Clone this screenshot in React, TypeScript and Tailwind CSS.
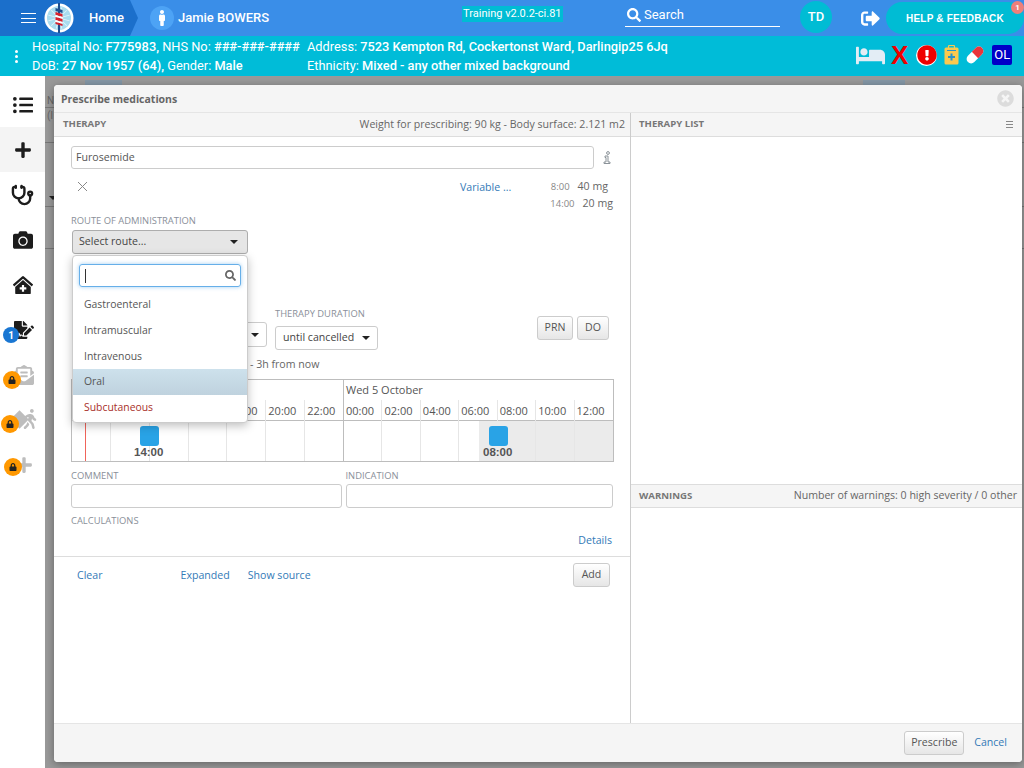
import React from 'react';
import { Stethoscope } from 'lucide-react';
import {
  FaBed,
  FaCamera,
  FaClinicMedical,
  FaEnvelopeOpenText,
  FaExclamationCircle,
  FaFileSignature,
  FaListUl,
  FaLock,
  FaMale,
  FaPlus,
  FaSearch,
  FaSignOutAlt,
  FaTimesCircle,
  FaWalking,
} from 'react-icons/fa';

const routes = ['Gastroenteral', 'Intramuscular', 'Intravenous', 'Oral', 'Subcutaneous'];
const hours = ['10:00', '12:00', '14:00', '16:00', '18:00', '20:00', '22:00', '00:00', '02:00', '04:00', '06:00', '08:00', '10:00', '12:00'];
const rays = [0, 30, 60, 90, 120, 150];

function Logo() {
  return (
    <svg width="30" height="30" viewBox="0 0 30 30" className="shrink-0">
      <circle cx="15" cy="15" r="14.5" fill="#fff" />
      <circle cx="15" cy="15" r="12" fill="#a9dcef" />
      {rays.map((a) => (
        <rect key={a} x="14.6" y="4" width="0.8" height="22" fill="#e4f5fa" transform={`rotate(${a + 15} 15 15)`} />
      ))}
      <circle cx="15" cy="15" r="4" fill="#d6eff6" />
      <rect x="14" y="0" width="2" height="30" fill="#1d4f8f" />
      <path d="M11.5 5 L18.5 7 V10 L11.5 8z" fill="#1d4f8f" />
      <path d="M11.5 9 L18.5 11 V14 L11.5 12z" fill="#d8202c" />
      <path d="M11.5 12 L18.5 14 V16 L11.5 14z" fill="#fff" />
      <path d="M11.5 14 L18.5 16 V19 L11.5 17z" fill="#d8202c" />
      <path d="M11.5 17 L18.5 19 V21 L11.5 19z" fill="#fff" />
      <path d="M11.5 19 L18.5 21 V23 L11.5 21z" fill="#d8202c" />
    </svg>
  );
}

function Capsule() {
  return (
    <svg width="20" height="20" viewBox="0 0 20 20">
      <g transform="rotate(-45 10 10)">
        <rect x="0" y="5.5" width="20" height="9" rx="4.5" fill="#fff" />
        <path d="M10 5.5 h5.5 a4.5 4.5 0 0 1 0 9 H10z" fill="#e9353b" />
      </g>
    </svg>
  );
}

function ClipboardPlus() {
  return (
    <svg width="15" height="20" viewBox="0 0 15 20">
      <rect x="0.5" y="2.5" width="14" height="17" rx="1.5" fill="#fbc94f" />
      <rect x="4.5" y="0.5" width="6" height="4" rx="1" fill="none" stroke="#fbc94f" strokeWidth="1.2" />
      <rect x="3" y="5" width="9" height="1" fill="#2a93c9" />
      <path d="M6.5 8.5 h2 v2.5 h2.5 v2 h-2.5 v2.5 h-2 v-2.5 h-2.5 v-2 h2.5z" fill="#2a93c9" />
    </svg>
  );
}

function InfoGlyph() {
  return (
    <svg width="8" height="13" viewBox="0 0 8 13" fill="none" stroke="#8a9298" strokeWidth="1">
      <circle cx="5" cy="2" r="1.4" />
      <path d="M2 5 H5 V11 H7 V12.5 H1 V11 H3 V6.5 H2z" />
    </svg>
  );
}

function Caret() {
  return <span className="inline-block w-0 h-0 border-x-[4px] border-x-transparent border-t-[4px] border-t-[#222]" />;
}

function LockBadge({ className }: { className: string }) {
  return (
    <span className={`absolute w-[18px] h-[18px] rounded-full bg-[#ff9800] flex items-center justify-center ${className}`}>
      <FaLock className="text-[#222] text-[8px]" />
    </span>
  );
}

function Label({ children }: { children: React.ReactNode }) {
  return <div className="text-[9.4px] leading-[12px] text-[#8a8f99] uppercase">{children}</div>;
}

function SideItem({ children, active }: { children: React.ReactNode; active?: boolean }) {
  return <div className={`relative h-[45px] flex items-center justify-center ${active ? 'bg-[#f4f4f4]' : ''}`}>{children}</div>;
}

function Sidebar() {
  return (
    <div className="w-[45px] shrink-0 bg-white pt-[6px] text-[#1c1c1c]">
      <SideItem><FaListUl className="text-[20px]" /></SideItem>
      <SideItem active><FaPlus className="text-[18px]" /></SideItem>
      <SideItem><Stethoscope size={23} strokeWidth={2.5} className="mt-[2px]" /></SideItem>
      <SideItem><FaCamera className="text-[20px]" /></SideItem>
      <SideItem><FaClinicMedical className="text-[20px]" /></SideItem>
      <SideItem>
        <FaFileSignature className="text-[20px] ml-[3px]" />
        <span className="absolute left-[3px] top-[20px] w-[16px] h-[16px] rounded-full bg-[#1976d2] text-white text-[10px] font-bold flex items-center justify-center">1</span>
      </SideItem>
      <SideItem>
        <FaEnvelopeOpenText className="text-[20px] text-[#bdbdbd] ml-[3px]" />
        <LockBadge className="left-[3px] top-[19px]" />
      </SideItem>
      <SideItem>
        <span className="absolute left-[13px] top-[16px] w-[13px] h-[13px] bg-[#bdbdbd] rotate-45" />
        <FaWalking className="relative text-[20px] text-[#bdbdbd] ml-[14px] mb-[2px]" />
        <LockBadge className="left-[1px] top-[18px]" />
      </SideItem>
      <SideItem>
        <FaPlus className="text-[18px] text-[#bdbdbd] ml-[3px]" />
        <LockBadge className="left-[4px] top-[16px]" />
      </SideItem>
    </div>
  );
}

function TimeGrid() {
  return (
    <div className="mt-[7px] w-[543px] h-[83px] border border-[#bdbdbd] text-[11px] text-[#555]">
      <div className="h-[20px] grid grid-cols-[repeat(7,38.86px)_repeat(7,1fr)]">
        <div className="col-span-7 border-r border-[#bdbdbd]" />
        <div className="col-span-7 pl-[2px] leading-[20px]">Wed 5 October</div>
      </div>
      <div className="h-[21px] grid grid-cols-[repeat(7,38.86px)_repeat(7,1fr)] border-b border-[#bdbdbd]">
        {hours.map((h, i) => (
          <div key={i} className={`pl-[2px] leading-[22px] ${i === 6 ? 'border-r border-[#bdbdbd]' : 'border-r border-[#e6e6e6]'} ${i === 13 ? 'border-r-0' : ''}`}>{h}</div>
        ))}
      </div>
      <div className="relative h-[40px] grid grid-cols-[repeat(7,38.86px)_repeat(7,1fr)]">
        {hours.map((h, i) => (
          <div key={i} className={`${i === 6 ? 'border-r border-[#bdbdbd]' : 'border-r border-[#e6e6e6]'} ${i === 13 ? 'border-r-0' : ''} ${i >= 11 ? 'bg-[#ebebeb]' : ''}`} />
        ))}
        <div className="absolute left-[407px] top-0 bottom-0 w-[20px] bg-[#ebebeb]" />
        <div className="absolute left-[13px] top-0 bottom-0 w-px bg-[#f0645a]" />
        <div className="absolute left-[68px] top-[5px] w-[19px] h-[20px] rounded-[3px] bg-[#29a3e6]" />
        <div className="absolute left-[62px] top-[24px] text-[11.5px] leading-[14px] font-bold text-[#555] font-['Liberation_Sans',sans-serif]">14:00</div>
        <div className="absolute left-[417px] top-[5px] w-[19px] h-[20px] rounded-[3px] bg-[#29a3e6]" />
        <div className="absolute left-[411px] top-[24px] text-[11.5px] leading-[14px] font-bold text-[#555] font-['Liberation_Sans',sans-serif]">08:00</div>
      </div>
    </div>
  );
}

function RouteDropdown() {
  return (
    <div className="absolute left-[18px] top-[142px] w-[176px] h-[168px] bg-white border border-[#ccc] rounded-[4px] shadow-[0_3px_10px_rgba(0,0,0,0.25)] pt-[8px] overflow-hidden z-10">
      <div className="mx-[6px] h-[23px] border border-[#66afe9] rounded-[3px] shadow-[0_0_4px_rgba(102,175,233,0.6)] flex items-center justify-between pl-[5px] pr-[4px]">
        <span className="w-px h-[14px] bg-[#333]" />
        <FaSearch className="text-[11px] text-[#666]" />
      </div>
      <div className="mt-[5px] text-[10.4px] text-[#555]">
        {routes.map((r) => (
          <div
            key={r}
            className={`h-[25.75px] leading-[25px] pl-[11px] ${r === 'Oral' ? 'bg-gradient-to-b from-[#cde1ec] to-[#bfd2de]' : ''} ${r === 'Subcutaneous' ? 'text-[#a9302a]' : ''}`}
          >
            {r}
          </div>
        ))}
      </div>
    </div>
  );
}

function TherapyPanel() {
  return (
    <div className="relative w-[577px] shrink-0 border-r border-[#ccc] flex flex-col">
      <div className="h-[24px] bg-[#f5f5f5] border-b border-[#ddd] flex items-center justify-between pl-[9px] pr-[5px] text-[9.6px] text-[#777]">
        <span className="font-bold">THERAPY</span>
        <span className="text-[10.6px] text-[#666]">Weight for prescribing: 90 kg - Body surface: 2.121 m2</span>
      </div>

      <div className="flex-1 px-[17px] pt-[9px]">
        <div className="flex items-center">
          <div className="w-[523px] h-[23px] border border-[#ccc] rounded-[3px] pl-[4px] text-[10.6px] leading-[20px] text-[#555]">Furosemide</div>
          <span className="ml-[9px] flex"><InfoGlyph /></span>
        </div>

        <div className="flex mt-[8px] h-[38px] text-[10.6px]">
          <svg width="11" height="11" viewBox="0 0 11 11" className="ml-[6px] mt-[4px]">
            <path d="M1 1 L10 10 M10 1 L1 10" stroke="#888" strokeWidth="1" />
          </svg>
          <span className="ml-[372px] mt-[3px] text-[#337ab7]">Variable ...</span>
          <div className="ml-auto text-right leading-[16px] text-[#666] mt-[1px]">
            <div><span className="text-[9.5px] text-[#888] mr-[8px]">8:00</span><span className="mr-[5px]">40 mg</span></div>
            <div><span className="text-[9.5px] text-[#888] mr-[8px]">14:00</span>20 mg</div>
          </div>
        </div>

        <Label>Route of administration</Label>
        <div className="mt-[3px] ml-[1px] w-[176px] h-[24px] bg-[#e6e6e6] border border-[#adadad] rounded-[3px] flex items-center justify-between px-[6px] text-[10.6px] text-[#444]">
          <span>Select route...</span>
          <span className="mr-[3px] flex"><Caret /></span>
        </div>

        <div className="mt-[54px] flex h-[39px]">
          <div className="w-[196px] flex flex-col items-end">
            <div className="h-[31px] w-[40px] border border-[#ccc] rounded-[3px] mt-[14px] flex items-center justify-center pl-[16px]"><Caret /></div>
          </div>
          <div className="ml-[8px]">
            <Label>Therapy duration</Label>
            <div className="mt-[6px] w-[103px] h-[24px] border border-[#ccc] rounded-[3px] flex items-center justify-between px-[7px] text-[10.6px] text-[#444]">
              <span>until cancelled</span>
              <Caret />
            </div>
          </div>
          <div className="ml-auto mr-[4px] flex gap-[4px] mt-[8px] text-[10.6px] text-[#555]">
            <button className="w-[36px] h-[24px] border border-[#ccc] rounded-[3px] bg-gradient-to-b from-white to-[#e6e6e6]">PRN</button>
            <button className="w-[32px] h-[24px] border border-[#ccc] rounded-[3px] bg-gradient-to-b from-white to-[#e6e6e6]">DO</button>
          </div>
        </div>

        <div className="mt-[9px] pl-[179px] h-[16px] text-[10.6px] leading-[16px] text-[#666]">- 3h from now</div>

        <TimeGrid />

        <div className="mt-[8px] flex gap-[4px]">
          <div className="w-[271px]">
            <Label>Comment</Label>
            <div className="mt-[2px] h-[24px] border border-[#ccc] rounded-[3px]" />
          </div>
          <div className="w-[268px]">
            <Label>Indication</Label>
            <div className="mt-[2px] h-[24px] border border-[#ccc] rounded-[3px]" />
          </div>
        </div>

        <div className="mt-[7px]"><Label>Calculations</Label></div>
        <div className="mt-[6px] w-[541px] text-right text-[10.6px] leading-[14px] text-[#337ab7]">Details</div>
      </div>

      <div className="absolute left-0 right-0 top-[443px] h-[37px] border-t border-[#ddd] flex items-start text-[10.6px] text-[#337ab7]">
        <span className="ml-[23px] mt-[11px]">Clear</span>
        <span className="ml-[78px] mt-[11px]">Expanded</span>
        <span className="ml-[18px] mt-[11px]">Show source</span>
        <button className="ml-auto mr-[20px] mt-[6px] w-[37px] h-[24px] border border-[#ccc] rounded-[3px] bg-gradient-to-b from-white to-[#e6e6e6] text-[#555]">Add</button>
      </div>

      <RouteDropdown />
    </div>
  );
}

function RightPanel() {
  return (
    <div className="flex-1 flex flex-col">
      <div className="h-[24px] bg-[#f5f5f5] border-b border-[#ddd] flex items-center justify-between px-[8px] text-[9.6px] text-[#777]">
        <span className="font-bold">THERAPY LIST</span>
        <span className="w-[7px] h-[7px] border-y border-[#888] flex items-center mr-[1px]"><span className="w-full h-px bg-[#888]" /></span>
      </div>
      <div className="h-[347px]" />
      <div className="h-[24px] bg-[#f5f5f5] border-y border-[#ddd] flex items-center justify-between pl-[8px] pr-[5px] text-[9.6px] text-[#777]">
        <span className="font-bold">WARNINGS</span>
        <span className="text-[10.6px] text-[#666]">Number of warnings: 0 high severity / 0 other</span>
      </div>
      <div className="flex-1" />
    </div>
  );
}

function PrescribeModal() {
  return (
    <div className="absolute left-[9px] top-[9px] w-[968px] h-[677px] bg-white rounded-[4px] shadow-[0_2px_8px_rgba(0,0,0,0.35)] flex flex-col overflow-hidden font-['Open_Sans',sans-serif]">
      <div className="h-[28px] shrink-0 bg-[#f5f5f5] border-b border-[#e5e5e5] flex items-center justify-between pl-[7px] pr-[8px]">
        <span className="pt-[2px] text-[10.5px] font-bold text-[#666]">Prescribe medications</span>
        <FaTimesCircle className="text-[17px] text-[#dcdcdc]" />
      </div>
      <div className="flex-1 flex min-h-0">
        <TherapyPanel />
        <RightPanel />
      </div>
      <div className="h-[39px] shrink-0 bg-[#f5f5f5] border-t border-[#e5e5e5] flex items-center justify-end pr-[15px] text-[10.6px]">
        <button className="w-[60px] h-[24px] border border-[#ccc] rounded-[3px] bg-gradient-to-b from-white to-[#e6e6e6] text-[#555]">Prescribe</button>
        <span className="ml-[10px] text-[#337ab7]">Cancel</span>
      </div>
    </div>
  );
}

function Backdrop() {
  return (
    <div className="relative h-full text-[10px] text-[#666]">
      <span className="absolute left-[40px] top-[4px] w-[37px] h-[5px] bg-[#8497a6]" />
      <span className="absolute left-[818px] top-[4px] w-[42px] h-[5px] bg-[#8497a6]" />
      <div className="h-[32px] border-b border-[#777] pt-[20px] pl-[2px] leading-none">N</div>
      <div className="h-[35px] border-b border-[#777] pl-[2px]">(l</div>
      <div className="h-[64px] border-b border-[#777] pt-[46px] pl-[4px]"><Caret /></div>
      <div className="h-[42px] border-b border-[#777]" />
    </div>
  );
}

export default function App() {
  return (
    <div className="w-[1024px] h-[768px] overflow-hidden flex flex-col font-['Roboto',sans-serif] bg-[#999]">
      <header className="relative h-[36px] shrink-0 bg-[#3a8ee8] flex items-center text-white">
        <div className="h-full w-[130px] pl-[21px] bg-[#1b6fcb] flex items-center">
          <span className="w-[15px] h-[10px] border-y border-white flex items-center"><span className="w-full h-px bg-white" /></span>
          <span className="ml-[8px]"><Logo /></span>
          <span className="ml-[15px] text-[13px] font-medium">Home</span>
        </div>
        <div className="w-0 h-0 border-y-[18px] border-y-transparent border-l-[8px] border-l-[#1b6fcb]" />
        <span className="ml-[12px] w-[24px] h-[24px] rounded-full bg-[#4da3f5] flex items-center justify-center"><FaMale className="text-[16px]" /></span>
        <span className="ml-[4px] text-[13px] font-medium">Jamie BOWERS</span>
        <span className="ml-[193px] mb-[8px] px-px bg-[#00bcd4] text-[11px] leading-[16px]">Training v2.0.2-ci.81</span>
        <div className="absolute left-[625px] top-[3px] w-[155px] h-[24px] border-b border-white flex items-center">
          <FaSearch className="text-[14px] ml-[2px]" />
          <span className="ml-[3px] text-[13px]">Search</span>
        </div>
        <span className="absolute left-[800px] top-[1px] w-[32px] h-[32px] rounded-full bg-[#00bcd4] flex items-center justify-center text-[13px] font-medium">TD</span>
        <FaSignOutAlt className="absolute left-[861px] top-[9px] text-[19px]" />
        <div className="absolute left-[886px] top-[2px] w-[138px] h-[32px] rounded-full bg-[#00bcd4] flex items-center justify-center text-[10px] font-bold tracking-[0.2px] font-['Liberation_Sans',sans-serif]">HELP &amp; FEEDBACK</div>
        <span className="absolute left-[1011px] top-[1px] w-[13px] h-[13px] rounded-full bg-[#ef7f7a] text-[8px] font-bold flex items-center justify-center">1</span>
      </header>

      <div className="relative h-[40px] shrink-0 bg-[#00bcd8] text-white text-[12.8px] leading-[19px] flex">
        <div className="w-[32px] flex flex-col items-center justify-center gap-[2px]">
          <span className="w-[3px] h-[3px] bg-white rounded-full" />
          <span className="w-[3px] h-[3px] bg-white rounded-full" />
          <span className="w-[3px] h-[3px] bg-white rounded-full" />
        </div>
        <div className="w-[275px] pt-[1px] whitespace-nowrap">
          <div>Hospital No: <b className="font-medium">F775983,</b> NHS No: <b className="font-medium">###-###-####</b></div>
          <div>DoB: <b className="font-medium">27 Nov 1957 (64),</b> Gender: <b className="font-medium">Male</b></div>
        </div>
        <div className="pt-[1px] whitespace-nowrap">
          <div>Address: <b className="font-medium">7523 Kempton Rd, Cockertonst Ward, Darlingip25 6Jq</b></div>
          <div>Ethnicity: <b className="font-medium">Mixed - any other mixed background</b></div>
        </div>
        <div className="absolute left-[856px] top-[7px] flex items-center h-[24px]">
          <FaBed className="text-[29px] text-[#e3edf5]" />
          <span className="ml-[6px] text-[26px] leading-none font-black text-[#f00000] font-['Liberation_Sans',sans-serif]">X</span>
          <span className="ml-[8px] w-[21px] h-[21px] rounded-full bg-white flex items-center justify-center"><FaExclamationCircle className="text-[20px] text-[#f00000]" /></span>
          <span className="ml-[7px] flex"><ClipboardPlus /></span>
          <span className="ml-[6px] flex"><Capsule /></span>
          <span className="ml-[7px] w-[20px] h-[20px] rounded-[2px] bg-[#0000c8] text-[13px] leading-[20px] text-center">OL</span>
        </div>
      </div>

      <div className="flex-1 flex min-h-0">
        <Sidebar />
        <div className="relative flex-1">
          <Backdrop />
          <PrescribeModal />
        </div>
      </div>
    </div>
  );
}
